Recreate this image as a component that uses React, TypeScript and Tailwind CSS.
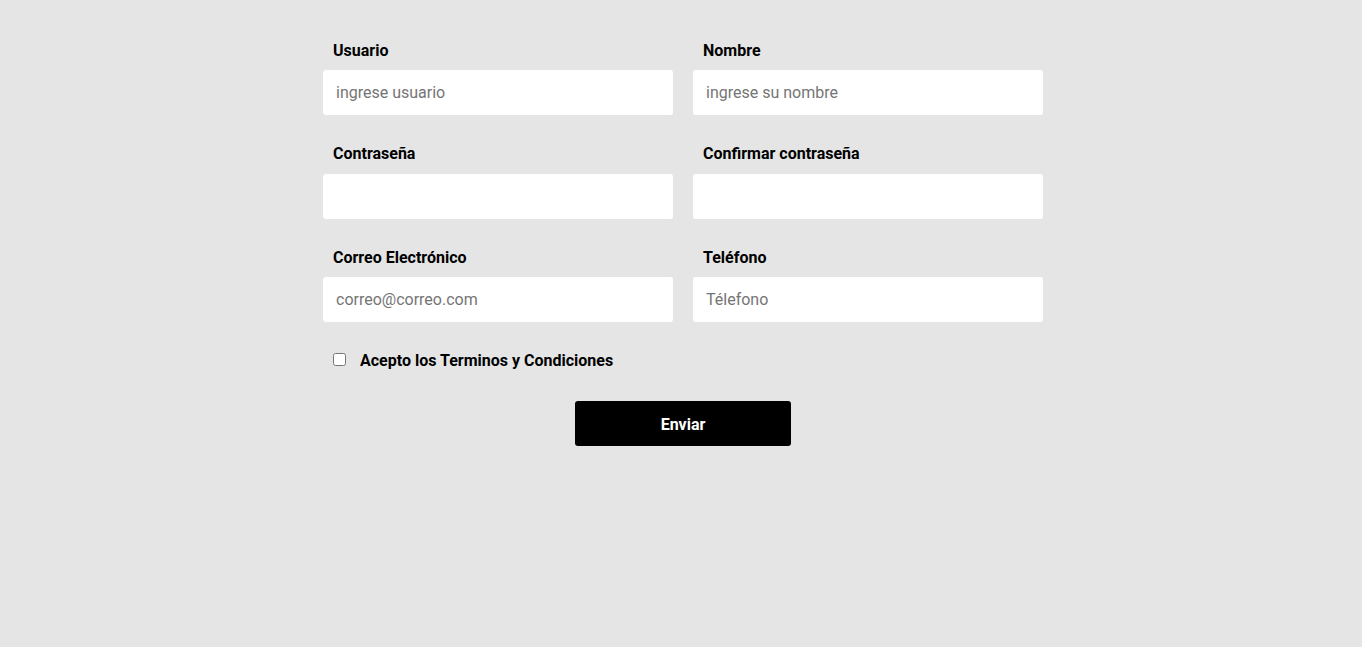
import React from "react";

const Field = ({ label, placeholder, type = "text", high = false }: { label: string; placeholder?: string; type?: string; high?: boolean }) => (
  <div className="flex flex-col">
    <label className={high ? "pl-[10px] text-[16px] leading-[24px] font-bold text-black" : "pl-[10px] pt-[1px] text-[16px] leading-[24px] font-bold text-black"}>{label}</label>
    <input
      type={type}
      placeholder={placeholder}
      className={(high ? "mt-[8px] " : "mt-[7px] ") + "h-[45px] w-full rounded-[3px] bg-white px-[13px] text-[16px] text-black outline-none placeholder:text-[#757575]"}
    />
  </div>
);

export default function App() {
  return (
    <div className="min-h-[647px] w-full bg-[#e5e5e5] pl-[4px]" style={{ fontFamily: "Roboto, 'Liberation Sans', sans-serif" }}>
      <div className="mx-auto w-[720px] pt-[38px]">
        <div className="grid grid-cols-2 gap-x-[20px]">
          <Field label="Usuario" placeholder="ingrese usuario" />
          <Field label="Nombre" placeholder="ingrese su nombre" />
        </div>
        <div className="mt-[27px] grid grid-cols-2 gap-x-[20px]">
          <Field label="Contraseña" type="password" high />
          <Field label="Confirmar contraseña" type="password" high />
        </div>
        <div className="mt-[26px] grid grid-cols-2 gap-x-[20px]">
          <Field label="Correo Electrónico" placeholder="correo@correo.com" />
          <Field label="Teléfono" placeholder="Télefono" />
        </div>
        <div className="mt-[27px] flex items-start pl-[10px]">
          <input type="checkbox" className="m-0 mt-[4px] h-[13px] w-[13px]" />
          <span className="ml-[14px] text-[16px] leading-[24px] font-bold text-black">Acepto los Terminos y Condiciones</span>
        </div>
        <div className="mt-[28px] flex justify-center">
          <button className="h-[45px] w-[216px] rounded-[3px] bg-black pt-[2px] text-[16px] font-bold text-white">Enviar</button>
        </div>
      </div>
    </div>
  );
}
